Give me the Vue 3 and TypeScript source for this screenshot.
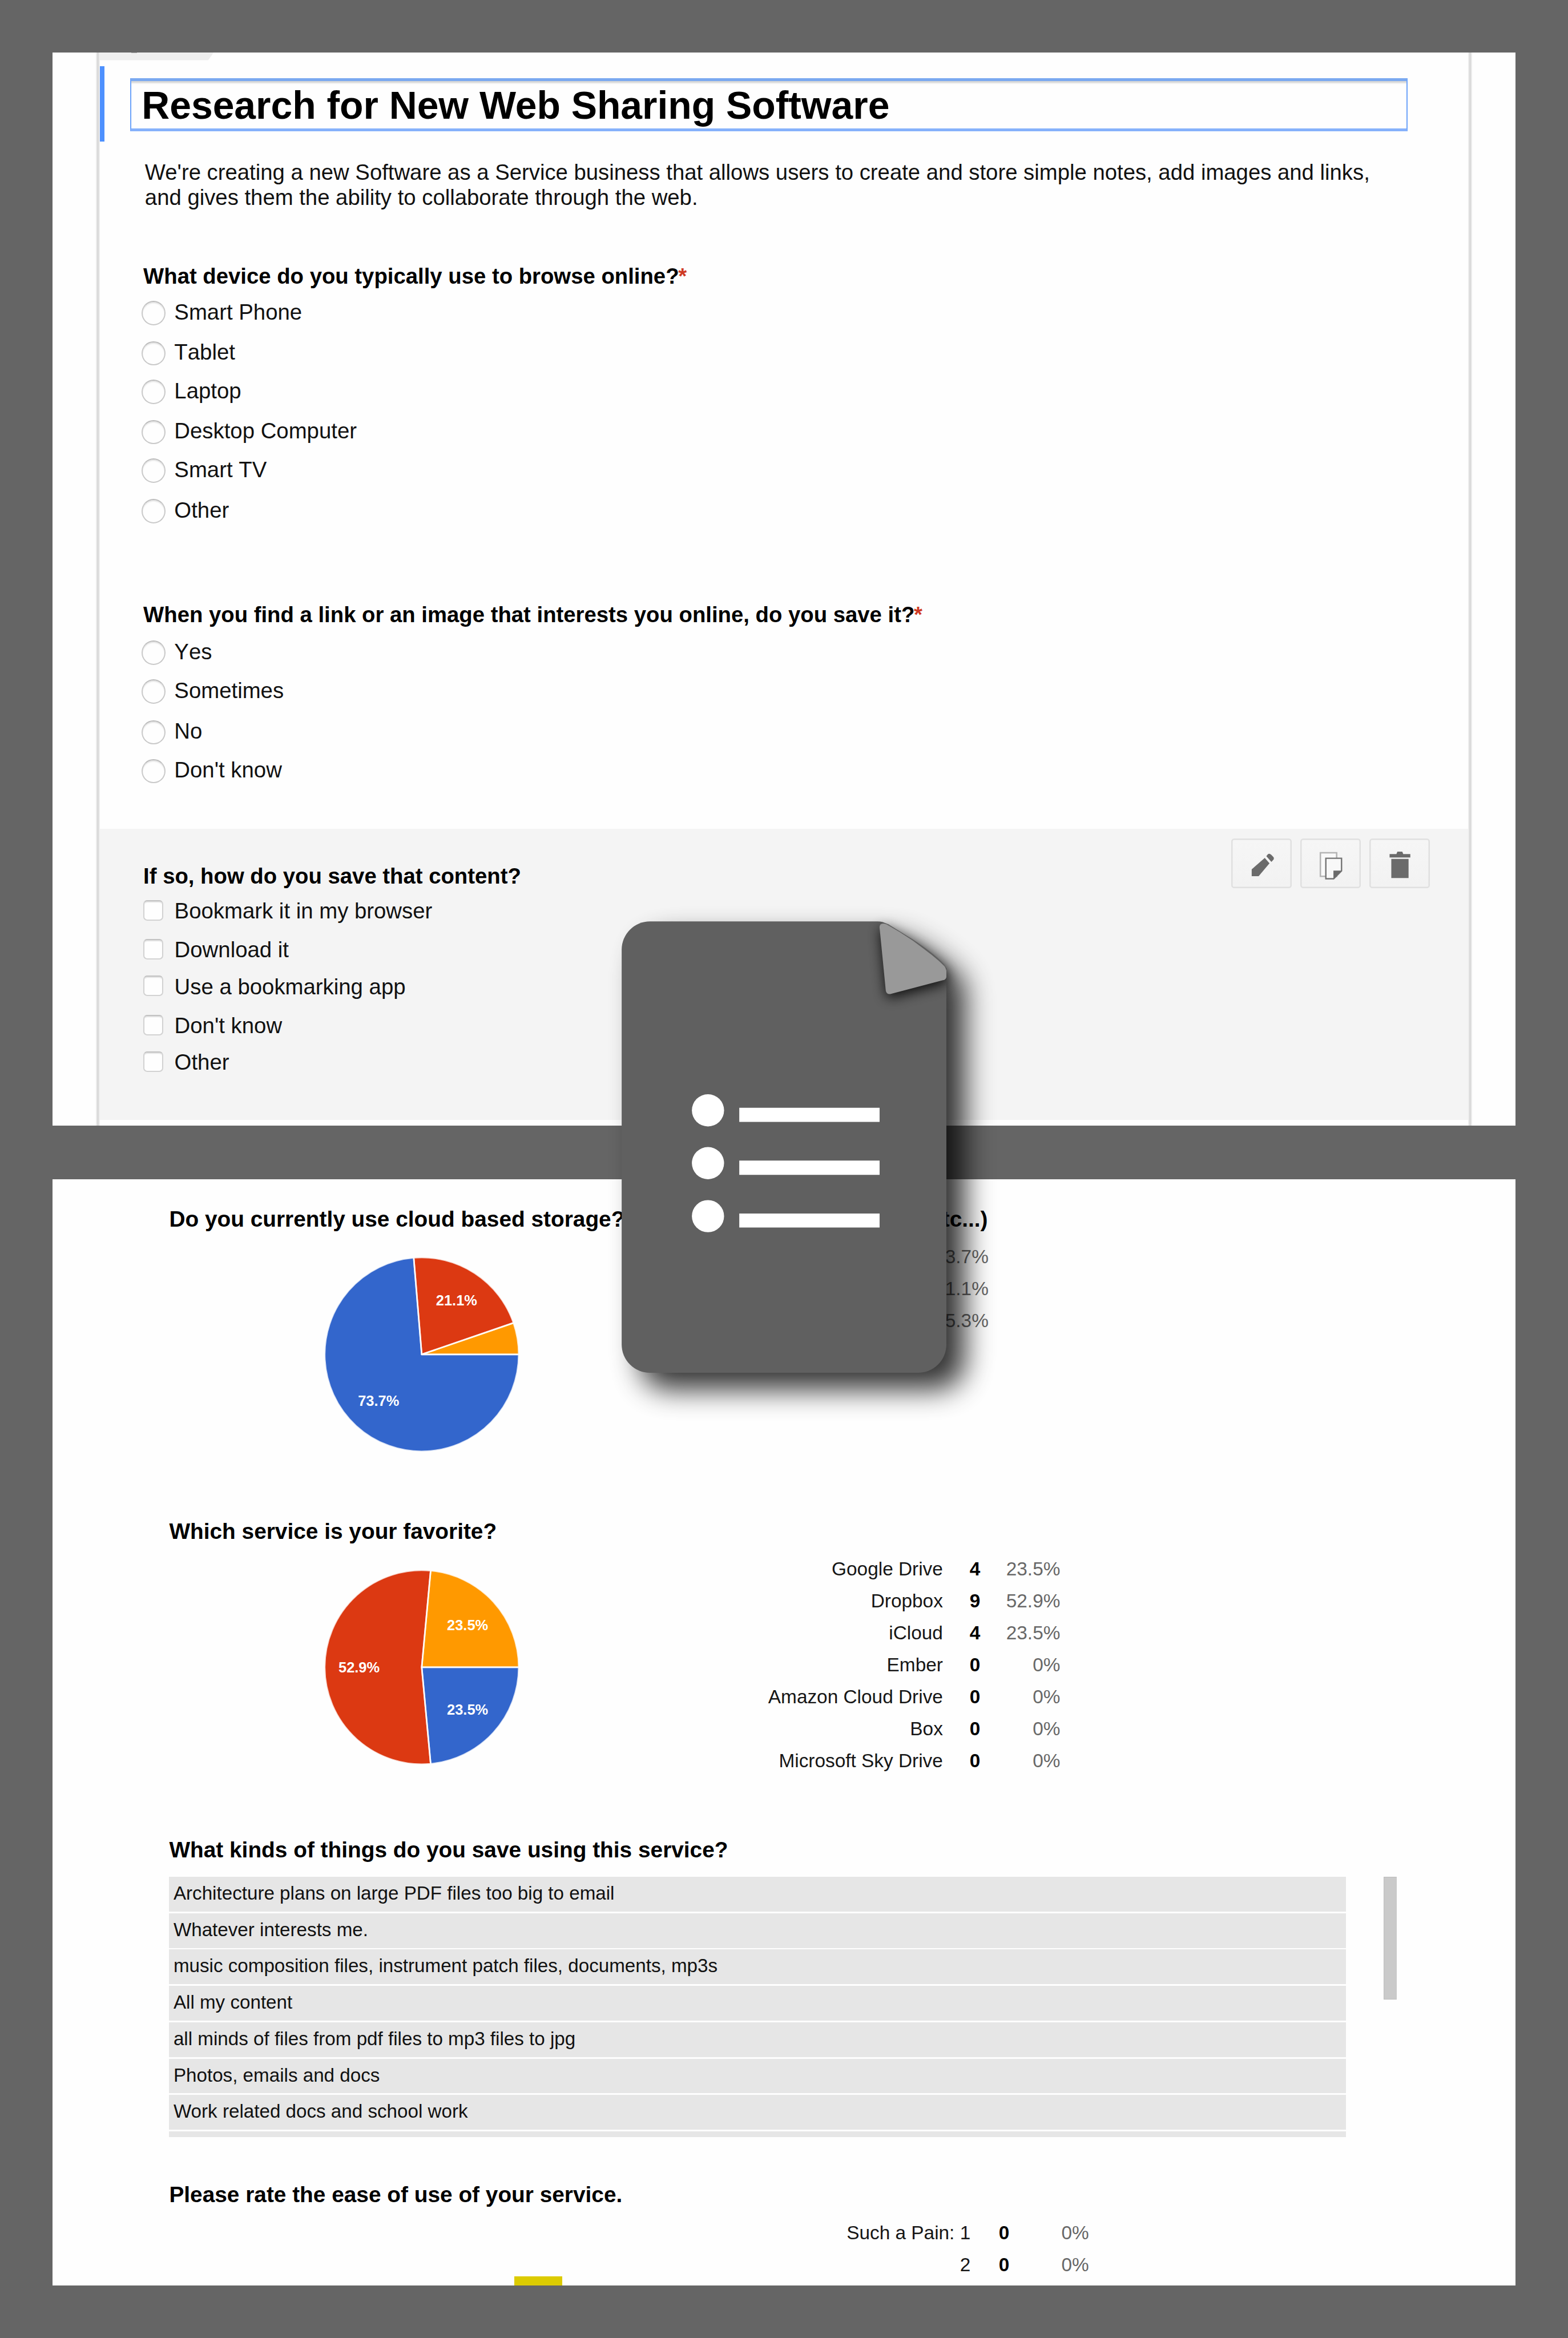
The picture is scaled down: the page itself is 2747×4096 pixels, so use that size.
<script setup lang="ts">
interface Slice { share: number; color: string; label?: string; x?: number; y?: number }
interface Row { label: string; count: string; pct: string }

const devices = ['Smart Phone', 'Tablet', 'Laptop', 'Desktop Computer', 'Smart TV', 'Other']
const saves = ['Yes', 'Sometimes', 'No', "Don't know"]
const methods = ['Bookmark it in my browser', 'Download it', 'Use a bookmarking app', "Don't know", 'Other']

const BLUE = '#3366cc'
const RED = '#dc3912'
const ORANGE = '#ff9900'

// Label positions are the centre x and the baseline y inside a 400 by 400 chart.
const storage: Slice[] = [
  { share: 14 / 19, color: BLUE, label: '73.7%', x: 111.5, y: 306 },
  { share: 4 / 19, color: RED, label: '21.1%', x: 271.5, y: 100 },
  { share: 1 / 19, color: ORANGE },
]
const favorite: Slice[] = [
  { share: 4 / 17, color: BLUE, label: '23.5%', x: 294, y: 297.5 },
  { share: 9 / 17, color: RED, label: '52.9%', x: 71.5, y: 211 },
  { share: 4 / 17, color: ORANGE, label: '23.5%', x: 294, y: 124.5 },
]

function arcs(slices: Slice[]) {
  let turn = 0
  return slices.map((s) => {
    const a = turn * 2 * Math.PI
    turn += s.share
    const b = turn * 2 * Math.PI
    const p = (t: number) => `${(200 + 199 * Math.cos(t)).toFixed(2)} ${(200 + 199 * Math.sin(t)).toFixed(2)}`
    return { ...s, d: `M200 200L${p(a)}A199 199 0 ${s.share > 0.5 ? 1 : 0} 1 ${p(b)}Z` }
  })
}
const charts = { storage: arcs(storage), favorite: arcs(favorite) }

const storagePct = ['73.7%', '21.1%', '5.3%']
const services: Row[] = [
  { label: 'Google Drive', count: '4', pct: '23.5%' },
  { label: 'Dropbox', count: '9', pct: '52.9%' },
  { label: 'iCloud', count: '4', pct: '23.5%' },
  { label: 'Ember', count: '0', pct: '0%' },
  { label: 'Amazon Cloud Drive', count: '0', pct: '0%' },
  { label: 'Box', count: '0', pct: '0%' },
  { label: 'Microsoft Sky Drive', count: '0', pct: '0%' },
]
const ratings: Row[] = [
  { label: 'Such a Pain: 1', count: '0', pct: '0%' },
  { label: '2', count: '0', pct: '0%' },
]
const answers = [
  'Architecture plans on large PDF files too big to email',
  'Whatever interests me.',
  'music composition files, instrument patch files, documents, mp3s',
  'All my content',
  'all minds of files from pdf files to mp3 files to jpg',
  'Photos, emails and docs',
  'Work related docs and school work',
]
</script>

<template>
  <main class="page">
    <section class="panel editor">
      <div class="rail"></div>
      <div class="form">
        <div class="tab"></div>
        <header class="title-row">
          <div class="marker"></div>
          <h1 class="title">Research for New Web Sharing Software</h1>
        </header>
        <p class="intro">We're creating a new Software as a Service business that allows users to create and store simple notes, add images and links,<br>and gives them the ability to collaborate through the web.</p>

        <section class="question q-device">
          <h2>What device do you typically use to browse online?<span class="req">*</span></h2>
          <ul>
            <li v-for="o in devices" :key="o"><i class="radio"></i><span>{{ o }}</span></li>
          </ul>
        </section>

        <section class="question q-save">
          <h2>When you find a link or an image that interests you online, do you save it?<span class="req">*</span></h2>
          <ul>
            <li v-for="o in saves" :key="o"><i class="radio"></i><span>{{ o }}</span></li>
          </ul>
        </section>

        <div class="active">
          <section class="question q-how">
            <h2>If so, how do you save that content?</h2>
            <ul>
              <li v-for="o in methods" :key="o"><i class="check"></i><span>{{ o }}</span></li>
            </ul>
          </section>
          <div class="tools">
            <button class="tool" aria-label="Edit">
              <svg viewBox="0 0 124 101">
                <path d="M42 63.3L68.8 39.8L78.5 50.8L56.3 77.3H42Z" fill="#6b6b6b" />
                <path d="M72 36.4L75 32.4Q77 30.6 79.5 31.6L82.4 33.6L86.8 38.2Q88.2 40 87 43L82.4 48Z" fill="#6b6b6b" />
              </svg>
            </button>
            <button class="tool" aria-label="Duplicate">
              <svg viewBox="0 0 124 101">
                <path d="M41.2 29.2H74.6V77.500H41.2Z" fill="#fafafa" stroke="#b5b5b5" stroke-width="3" />
                <path d="M52.4 40.6H84.6V66.5L68.5 82.6H52.4Z" fill="#f8f8f8" stroke="#747474" stroke-width="2.8" />
                <path d="M68 66H85L68 83Z" fill="#6b6b6b" />
              </svg>
            </button>
            <button class="tool" aria-label="Delete">
              <svg viewBox="0 0 124 101">
                <path d="M41.5 32H55.5L57.5 27H67.5L69.5 32H84V38.8H41.5ZM45 42H80.4V81H45Z" fill="#6b6b6b" />
              </svg>
            </button>
          </div>
        </div>
      </div>
      <div class="rail"></div>
    </section>

    <section class="panel results">
      <section class="result r-storage">
        <h2 class="split"><span>Do you currently use cloud based storage?</span><span>etc...)</span></h2>
        <div class="body">
          <div class="chart">
            <svg viewBox="0 0 400 400" class="pie">
              <path v-for="s in charts.storage" :key="s.color" :d="s.d" :fill="s.color" />
              <path v-for="s in charts.storage" :key="s.color + 'e'" :d="s.d" class="edge" />
              <template v-for="s in charts.storage" :key="s.color + 't'">
                <text v-if="s.label" :x="s.x" :y="s.y">{{ s.label }}</text>
              </template>
            </svg>
          </div>
          <div class="table">
            <div v-for="p in storagePct" :key="p" class="row"><span class="pct">{{ p }}</span></div>
          </div>
        </div>
      </section>

      <section class="result r-favorite">
        <h2>Which service is your favorite?</h2>
        <div class="body">
          <div class="chart">
            <svg viewBox="0 0 400 400" class="pie">
              <path v-for="s in charts.favorite" :key="s.color" :d="s.d" :fill="s.color" />
              <path v-for="s in charts.favorite" :key="s.color + 'e'" :d="s.d" class="edge" />
              <text v-for="s in charts.favorite" :key="s.color + 't'" :x="s.x" :y="s.y">{{ s.label }}</text>
            </svg>
          </div>
          <div class="table">
            <div v-for="r in services" :key="r.label" class="row">
              <span class="label">{{ r.label }}</span><b class="count">{{ r.count }}</b><span class="pct">{{ r.pct }}</span>
            </div>
          </div>
        </div>
      </section>

      <section class="result r-kinds">
        <h2>What kinds of things do you save using this service?</h2>
        <div class="body">
          <ul class="answers">
            <li v-for="a in answers" :key="a">{{ a }}</li>
            <li></li>
          </ul>
          <div class="thumb"></div>
        </div>
      </section>

      <section class="result r-rate">
        <h2>Please rate the ease of use of your service.</h2>
        <div class="body">
          <div class="chart"><div class="bar"></div></div>
          <div class="table">
            <div v-for="r in ratings" :key="r.label" class="row">
              <span class="label">{{ r.label }}</span><b class="count">{{ r.count }}</b><span class="pct">{{ r.pct }}</span>
            </div>
          </div>
        </div>
      </section>
    </section>

    <svg class="doc" viewBox="1125 1739 1000 1300">
      <defs>
        <filter id="doc-shadow" x="-30%" y="-30%" width="160%" height="160%">
          <feGaussianBlur stdDeviation="29" />
        </filter>
        <filter id="fold-shadow" x="-60%" y="-60%" width="220%" height="220%">
          <feGaussianBlur stdDeviation="13" />
        </filter>
        <clipPath id="doc-clip">
          <path d="M1275 1889H1810L1941 1985V2815H1275Z" />
        </clipPath>
      </defs>
      <path d="M1333 1889H1800Q1812 1889 1825 1896Q1893 1927 1936 1976Q1941 1982 1941 1992V2757A58 58 0 0 1 1883 2815H1333A58 58 0 0 1 1275 2757V1947A58 58 0 0 1 1333 1889Z" fill="#000" opacity=".8" transform="translate(38 34)" filter="url(#doc-shadow)" />
      <path d="M1804 1901L1817 2032Q1819 2039 1826 2038L1935 2009Q1941 2006 1941 1990Q1938 1978 1916 1962Q1880 1930 1815 1894Q1805 1892 1804 1901Z" fill="#000" opacity=".8" transform="translate(1 8)" filter="url(#fold-shadow)" />
      <path d="M1333 1889H1800Q1810 1889 1822 1895L1872 1926Q1916 1955 1936 1977Q1941 1983 1941 1992V2757A58 58 0 0 1 1883 2815H1333A58 58 0 0 1 1275 2757V1947A58 58 0 0 1 1333 1889Z" fill="#606060" />
      <g clip-path="url(#doc-clip)">
        <path d="M1804 1901L1817 2032Q1819 2039 1826 2038L1935 2009Q1941 2006 1941 1990Q1938 1978 1916 1962Q1880 1930 1815 1894Q1805 1892 1804 1901Z" fill="#000" opacity=".85" transform="translate(1 8)" filter="url(#fold-shadow)" />
      </g>
      <path d="M1804 1902L1816.7 2031Q1818 2039 1826 2038L1935 2009.5Q1940.5 2008 1941 2003V1992Q1941 1986 1937 1981Q1925 1969 1911 1958Q1893 1944 1872.7 1929Q1845 1910 1818 1895Q1812 1892.5 1808 1894Q1803.5 1896 1804 1902Z" fill="#999" />
      <g fill="#fff">
        <circle cx="1452" cy="2276.7" r="33" />
        <circle cx="1452" cy="2385" r="33" />
        <circle cx="1452" cy="2493.7" r="33" />
        <path d="M1516.2 2271.3H1804V2300.4H1516.2ZM1516.2 2379.6H1804V2409H1516.2ZM1516.2 2488.3H1804V2516.9H1516.2Z" />
      </g>
    </svg>
  </main>
</template>

<style>
/* One rem is a hundred design units. */
html {
  font-size: 85.4167px;
  background: #656565;
}
</style>

<style scoped>
.page {
  position: relative;
  box-sizing: border-box;
  width: 32.16rem;
  height: 4096px;
  padding: 1.08rem;
  display: flex;
  flex-direction: column;
  gap: 1.1rem;
  background: #656565;
  overflow: hidden;
  font-family: "Liberation Sans", Arial, sans-serif;
  color: #000;
}
h1, h2, p, ul { margin: 0; padding: 0; }
ul { list-style: none; }
.panel {
  width: 30rem;
  background: #fefefe;
  overflow: hidden;
  flex: none;
}

.editor { height: 22.005rem; display: flex; justify-content: center; }
.rail {
  flex: none;
  width: .08rem;
  background: linear-gradient(90deg, #ececec 0 25%, #d9d9d9 25% 70%, #ececec 70%);
}
.form { width: 28.06rem; display: flex; flex-direction: column; }
.tab {
  flex: none;
  width: 2.33rem;
  height: .156rem;
  background: linear-gradient(90deg, transparent .64rem, #888 .64rem .76rem, transparent .76rem) top / 100% .01rem no-repeat, #eee;
  clip-path: polygon(0 0, 100% 0, calc(100% - .11rem) 100%, 0 100%);
}
.title-row { flex: none; display: flex; height: 1.54rem; margin-top: .124rem; }
.marker { width: .09rem; background: #4d90fe; }
.title {
  box-sizing: border-box;
  width: 26.21rem;
  height: 1.09rem;
  margin: .24rem 0 0 .525rem;
  padding-left: .218rem;
  border: .04rem solid #6ea4fb;
  border-width: .06rem .035rem;
  border-top-color: #7aa9f0;
  border-bottom-color: #86b1fb;
  box-shadow: inset 0 .05rem .03rem -.01rem #d6d6d6;
  font-size: .794rem;
  line-height: 1.01rem;
  font-weight: bold;
  white-space: nowrap;
}
.intro {
  flex: none;
  margin: .38rem 0 0 .922rem;
  font-size: .4485rem;
  line-height: .51rem;
  white-space: nowrap;
  color: #111;
}
.question h2 {
  padding-left: .04rem;
  font-size: .4485rem;
  line-height: .52rem;
  white-space: nowrap;
}
.req { color: #cf3a24; margin-left: -.015rem; }
.question { padding-left: .85rem; font-size: .449rem; flex: none; }
.question li { display: flex; line-height: .8rem; color: #111; white-space: nowrap; font-kerning: none; }
.q-device { margin-top: 1.115rem; height: 6.942rem; }
.q-device ul { padding-top: .068rem; }
.q-device li { height: .825rem; }
.q-device li:nth-child(even) { height: .793rem; }
.q-save { height: 4.645rem; }
.q-save ul { padding-top: .097rem; }
.q-save li { height: .796rem; }
.q-save li:nth-child(even) { height: .834rem; }
.q-how { padding-top: .71rem; }
.q-how ul { padding-top: .056rem; }
.q-how li { height: .8rem; }
.q-how li:nth-child(even) { height: .753rem; }
.radio, .check { box-sizing: border-box; flex: none; background: #fefefe; }
.radio {
  width: .49rem;
  height: .5rem;
  margin: .168rem .185rem 0 0;
  border: .025rem solid #c9c9c9;
  border-top-color: #bdbdbd;
  border-radius: 50%;
  box-shadow: inset 0 .03rem .03rem -.01rem #dcdcdc;
}
.check {
  width: .41rem;
  height: .425rem;
  margin: .17rem .225rem 0 .043rem;
  border: .025rem solid #d2d2d2;
  border-top-color: #c2c2c2;
  border-radius: .08rem;
  box-shadow: inset 0 .03rem .02rem -.01rem #dcdcdc;
}
.active {
  flex: none;
  display: flex;
  justify-content: space-between;
  height: 5.963rem;
  background: #f4f4f4;
}
.tools { display: flex; gap: .175rem; margin: .202rem .78rem 0 0; height: 1.01rem; }
.tool {
  box-sizing: border-box;
  width: 1.243rem;
  height: 1.01rem;
  padding: 0;
  border: 0;
  border-radius: .06rem;
  background: linear-gradient(#f6f6f6, #f2f2f2);
  box-shadow: inset 0 0 0 .03rem #e0e0e0;
}
.tool svg { display: block; width: 1.24rem; height: 1.01rem; }

.results {
  box-sizing: border-box;
  height: 22.69rem;
  padding: .56rem 0 0 2.39rem;
}
.result { overflow: hidden; }
.result h2 { font-size: .4545rem; line-height: .52rem; white-space: nowrap; }
.split { display: flex; justify-content: space-between; width: 16.79rem; }
.r-storage { height: 6.41rem; }
.r-favorite { height: 6.533rem; }
.r-kinds { height: 7.071rem; }
.r-rate { height: 2.13rem; }
.body { display: flex; align-items: flex-start; }
.chart { flex: none; width: 11.525rem; }
.pie { display: block; width: 4rem; height: 4rem; margin: .518rem 0 0 3.177rem; }
.edge { fill: none; stroke: #fff; stroke-opacity: .8; stroke-width: 3.2; stroke-linejoin: round; }
.pie text { fill: #fff; font-size: 29.8px; font-weight: bold; text-anchor: middle; }
.table { margin-top: .184rem; width: 5.28rem; font-size: .391rem; }
.row { display: flex; justify-content: flex-end; height: .656rem; line-height: .656rem; white-space: nowrap; }
.label { color: #161616; width: 4.344rem; text-align: right; }
.count { width: .766rem; text-align: right; }
.pct { width: 1.64rem; text-align: right; color: #686868; }
.r-favorite .table { width: 6.75rem; }
.r-rate .table { width: 7.34rem; margin-top: .19rem; }
.r-rate .row { height: .653rem; }
.r-rate .label { width: 4.91rem; }
.r-rate .count { width: .797rem; }
.r-rate .pct { width: 1.633rem; }
.bar { width: .976rem; height: .3rem; margin: 1.415rem 0 0 7.08rem; background: #dccb00; }
.answers {
  width: 24.135rem;
  height: 5.34rem;
  margin-top: .287rem;
  overflow: hidden;
  font-size: .3885rem;
}
.answers li {
  height: .713rem;
  margin-bottom: .033rem;
  padding-left: .088rem;
  line-height: .68rem;
  background: #e6e6e6;
  color: #111;
}
.thumb {
  box-sizing: border-box;
  width: .27rem;
  height: 2.52rem;
  margin: .287rem 0 0 .769rem;
  background: #cacaca;
  border: .015rem solid #bcbcbc;
  border-right-color: #cacaca;
}
.doc {
  position: absolute;
  left: 11.25rem;
  top: 17.4rem;
  width: 10rem;
  height: 13rem;
}
</style>
